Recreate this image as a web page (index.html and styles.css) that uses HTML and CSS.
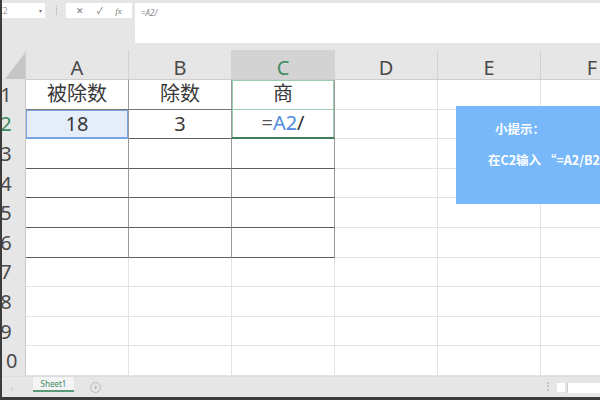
FILE: index.html
```html
<!DOCTYPE html>
<html lang="zh">
<head>
<meta charset="utf-8">
<link rel="stylesheet" href="styles.css">
</head>
<body>
<div class="app">
  <div class="toolbar">
    <div class="namebox"><span class="nb-text">C2</span><span class="caret">▾</span></div>
    <div class="sep"></div>
    <div class="btns"><span class="b">✕</span><span class="b">✓</span><span class="b fx">fx</span></div>
    <div class="formula">=A2/</div>
  </div>
  <div class="sheet">
    <div class="grid">
      <div class="corner"><div class="tri"></div></div>
      <div class="ch">A</div><div class="ch">B</div><div class="ch sel">C</div><div class="ch">D</div><div class="ch">E</div><div class="ch">F</div>

      <div class="rh"><span>1</span></div>
      <div class="c t tl">被除数</div><div class="c t tl">除数</div><div class="c t tl csel1">商</div><div class="c"></div><div class="c"></div><div class="c"></div>

      <div class="rh sel"><span>2</span></div>
      <div class="c t ref">18</div><div class="c t">3</div><div class="c t csel2"><span class="g">=</span><span class="blue">A2</span><span class="d">/</span></div><div class="c"></div><div class="c"></div><div class="c"></div>

      <div class="rh"><span>3</span></div>
      <div class="c t"></div><div class="c t"></div><div class="c t"></div><div class="c"></div><div class="c"></div><div class="c"></div>

      <div class="rh"><span>4</span></div>
      <div class="c t"></div><div class="c t"></div><div class="c t"></div><div class="c"></div><div class="c"></div><div class="c"></div>

      <div class="rh"><span>5</span></div>
      <div class="c t"></div><div class="c t"></div><div class="c t"></div><div class="c"></div><div class="c"></div><div class="c"></div>

      <div class="rh"><span>6</span></div>
      <div class="c t"></div><div class="c t"></div><div class="c t"></div><div class="c"></div><div class="c"></div><div class="c"></div>

      <div class="rh"><span>7</span></div>
      <div class="c"></div><div class="c"></div><div class="c"></div><div class="c"></div><div class="c"></div><div class="c"></div>

      <div class="rh"><span>8</span></div>
      <div class="c"></div><div class="c"></div><div class="c"></div><div class="c"></div><div class="c"></div><div class="c"></div>

      <div class="rh"><span>9</span></div>
      <div class="c"></div><div class="c"></div><div class="c"></div><div class="c"></div><div class="c"></div><div class="c"></div>

      <div class="rh"><span>10</span></div>
      <div class="c"></div><div class="c"></div><div class="c"></div><div class="c"></div><div class="c"></div><div class="c"></div>
    </div>
    <div class="tip">
      <div class="tip-title">小提示：</div>
      <div class="tip-line">在C2输入 “=A2/B2”</div>
    </div>
  </div>
  <div class="tabbar">
    <span class="nav">‹</span>
    <span class="tab">Sheet1</span>
    <span class="add">+</span>
    <span class="spacer"></span>
    <span class="dots"></span>
    <span class="mini"></span>
    <span class="hscroll"></span>
  </div>
</div>
</body>
</html>
```
FILE: styles.css
```css
* { box-sizing: border-box; }
html, body { margin: 0; padding: 0; }
body { width: 600px; height: 400px; overflow: hidden; background: #e6e6e6; }
.app {
  width: 600px; height: 400px; overflow: hidden;
  display: flex; flex-direction: column;
  border-left: 2px solid #3c3c3c;
  border-bottom: 3px solid #3c3c3c;
  font-family: "Noto Sans", "Noto Sans CJK SC", sans-serif;
  background: #e6e6e6;
}
.toolbar {
  height: 50px; flex: none;
  display: flex; align-items: flex-start;
  padding-top: 3px;
}
.namebox {
  width: 43px; height: 15px; background: #fff;
  display: flex; align-items: center; justify-content: space-between;
  font-size: 8px; color: #999; padding: 0 3px 0 0;
}
.nb-text { margin-left: -4px; }
.caret { font-size: 6px; color: #777; }
.sep {
  width: 1px; height: 9px; margin: 3px 9px 0 11px;
  border-left: 1px dotted #aaa;
}
.btns {
  width: 66px; height: 15px; background: #fff;
  display: flex; align-items: center; justify-content: space-around;
  font-size: 9px; color: #777; padding: 0 4px;
}
.fx { font-style: italic; font-family: "Liberation Serif", serif; }
.formula {
  flex: 1; height: 40px; margin-left: 3px; background: #fff;
  font-size: 8px; color: #888; padding: 4px 6px; font-style: italic;
}
.sheet { position: relative; flex: 1; overflow: hidden; background: #fff; }
.grid {
  display: grid;
  grid-template-columns: 24px repeat(6, 103px);
  grid-template-rows: 30px repeat(10, 29.6px);
  width: 642px;
}
.corner { background: #e6e6e6; position: relative; border-right: 1px solid #cfcfcf; }
.tri {
  position: absolute; left: 3px; top: 3px; width: 20px; height: 26px;
  background: #c5c5c5;
  clip-path: polygon(100% 0, 100% 100%, 0 100%);
}
.ch {
  background: #e6e6e6; color: #4a4a4a; font-size: 20px;
  display: flex; align-items: center; justify-content: center;
  border-right: 1px solid #d2d2d2; border-bottom: 1px solid #cdcdcd;
  padding-top: 6px;
}
.ch.sel { background: #d3d3d3; color: #3f8a63; }
.rh {
  background: #e6e6e6; border-right: 1px solid #c9c9c9;
  position: relative; overflow: visible; color: #4a4a4a; font-size: 20px;
  display: flex; align-items: center;
}
.rh span { display: block; flex: none; width: 40px; margin-left: -16px; text-align: center; line-height: 1; }
.rh.sel { color: #3f8a63; }
.c {
  background: #fff;
  border-right: 1px solid #e3e3e3; border-bottom: 1px solid #e3e3e3;
  display: flex; align-items: center; justify-content: center;
  font-size: 20px; color: #383838; line-height: 1;
}
.t { border-bottom: 1.5px solid #5e5e5e; border-right: 1px solid #9a9a9a; }
.tl { border-bottom-color: #777; }
.ref { background: #e4edf9; box-shadow: inset 0 0 0 1px #79a6e3; border-bottom-color: #79a6e3; }
.csel1 { box-shadow: inset 1px 1px 0 0 #9ccbb0, inset -1px 0 0 0 #9ccbb0; border-bottom: 1px solid #9ccbb0; }
.csel2 { box-shadow: inset 1px 0 0 0 #9ccbb0, inset -1px 0 0 0 #9ccbb0; border-bottom: 2px solid #3f7d5c; }
.g { color: #555; }
.blue { color: #4f8ae0; }
.d { color: #333; }
.tip {
  position: absolute; left: 454px; top: 56px; width: 160px; height: 98px;
  background: #77b8fb; color: #fff; font-weight: bold; font-size: 12.5px;
  font-family: "Noto Sans CJK SC", sans-serif;
}
.tip-title { position: absolute; left: 39px; top: 17px; line-height: 1; }
.tip-line { position: absolute; left: 32px; top: 48px; white-space: nowrap; line-height: 1; }
.tabbar {
  flex: none; height: 21px; background: #e6e6e6;
  display: flex; align-items: flex-start;
  border-top: 1px solid #dcdcdc;
}
.nav { font-size: 8px; color: #bbb; margin: 5px 0 0 9px; width: 20px; }
.tab {
  margin-left: 2px; width: 41px; height: 15px; background: #f4f4f4;
  font-size: 8px; color: #3f8a63; text-align: center; line-height: 13px;
  border-bottom: 2px solid #5a9a78;
}
.add {
  margin: 5px 0 0 16px; width: 11px; height: 11px; border: 1px solid #bbb; border-radius: 50%;
  font-size: 8px; line-height: 9px; text-align: center; color: #aaa;
}
.spacer { flex: 1; }
.dots { width: 1px; height: 9px; margin-top: 5px; border-left: 2px dotted #c4c4c4; margin-right: 8px; }
.mini { width: 8px; height: 9px; background: #fff; margin-top: 6px; margin-right: 2px; }
.hscroll { width: 33px; height: 10px; background: #fff; margin-top: 6px; border-left: 1px solid #ccc; }
```
